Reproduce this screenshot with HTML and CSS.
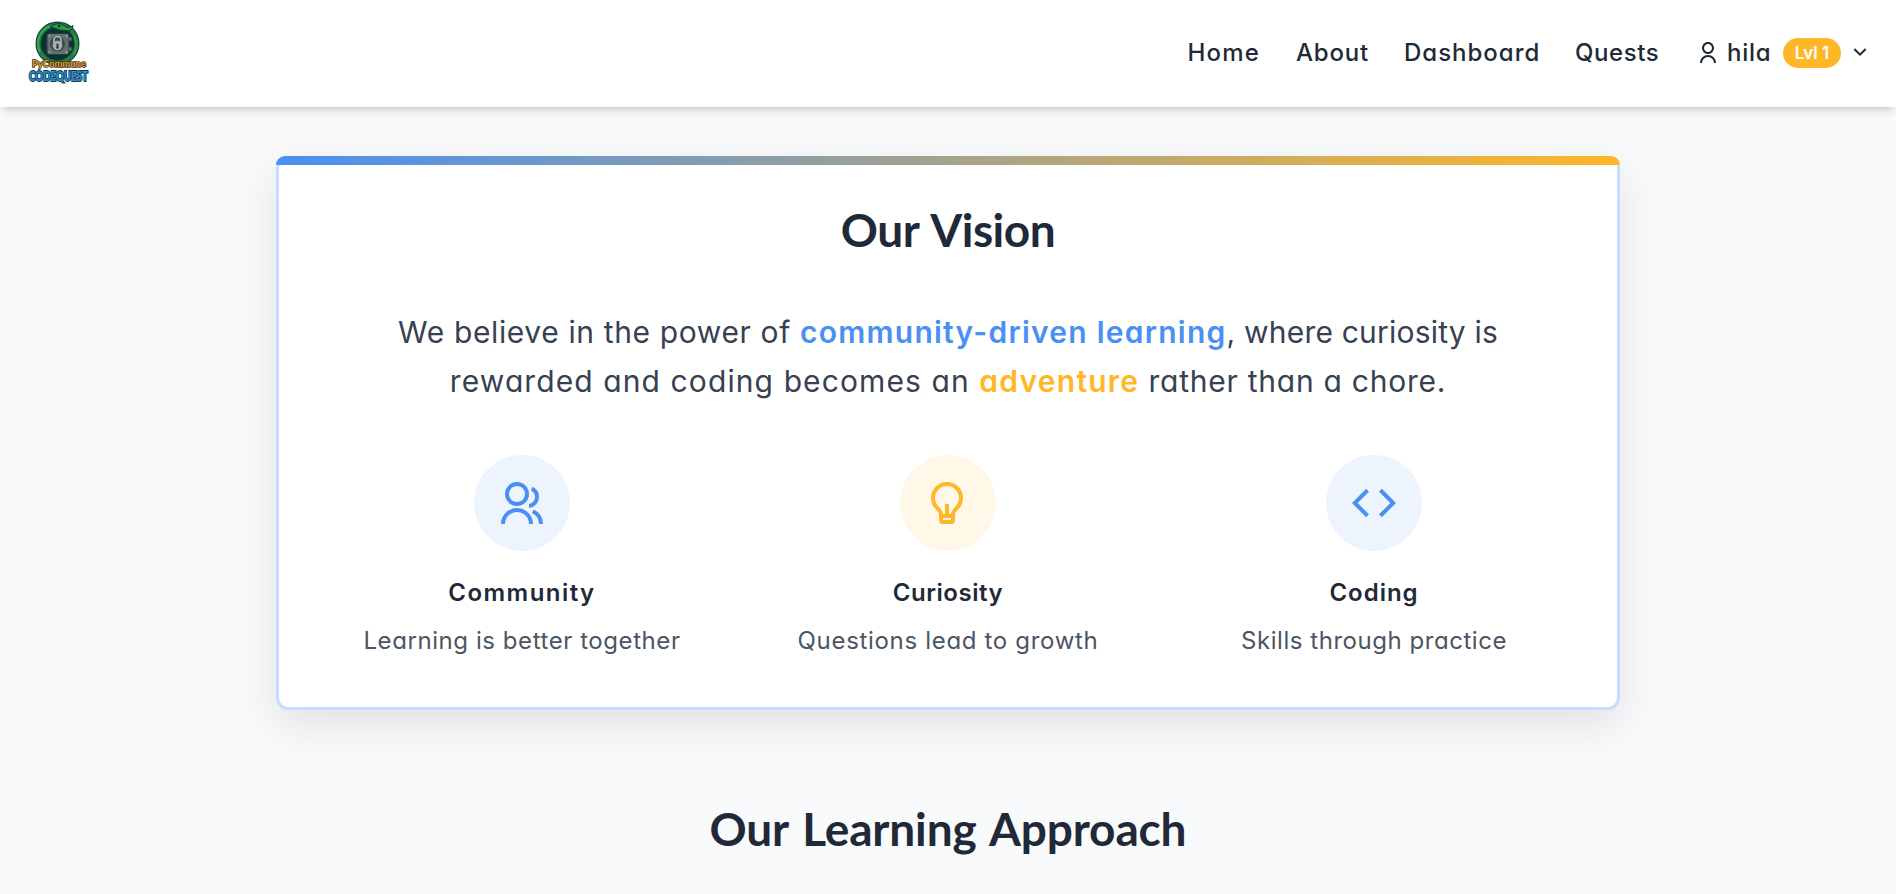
FILE: index.html
```
<!DOCTYPE html>
<html lang="en">
<head>
<meta charset="utf-8">
<title>PyCommune CodeQuest</title>
<link rel="stylesheet" href="styles.css">
</head>
<body>
<header class="header">
  <a class="logo" aria-label="PyCommune CodeQuest">
    <svg class="logo-art" width="66" height="66" viewBox="0 0 66 66">
      <circle cx="31.500" cy="22.500" r="19" fill="#0c3038" stroke="#123c37" stroke-width="6"/>
      <circle cx="31.500" cy="22.500" r="19" fill="none" stroke="#20823f" stroke-width="4"/>
      <path d="M14 31A19 19 0 0 1 24 5" fill="none" stroke="#42ad48" stroke-width="1.600"/>
      <path d="M48 16Q53 24 48 33" fill="none" stroke="#35a047" stroke-width="1.500"/>
      <path d="M25 5Q33 .5 38 4.500Q43 8 47 4.500Q47 9 43 10Q33 10 25 6Z" fill="#2d9845" stroke="#103b35"/>
      <circle cx="33" cy="5" r="1.200" fill="#0b2925"/>
      <rect x="21" y="12.500" width="22" height="21" rx="2" fill="#65716e" stroke="#273c3f"/>
      <path d="M43 16h3v4h-3M43 26h3v4h-3" fill="#65716e" stroke="#263c40"/>
      <g fill="#a0a9a4"><circle cx="23.500" cy="15" r="1"/><circle cx="40.500" cy="15" r="1"/><circle cx="23.500" cy="31" r="1"/><circle cx="40.500" cy="31" r="1"/></g>
      <circle cx="31.500" cy="23" r="7.500" fill="#3b4b4c"/>
      <path d="M28 22v-3a3.500 3.500 0 0 1 7 0V22" fill="none" stroke="#b2bbb5" stroke-width="1.600"/>
      <circle cx="31.500" cy="24.500" r="4.800" fill="#a9b2ac"/>
      <path d="M31.500 22.500a1.300 1.300 0 0 1 .8 2.200l.6 2.800h-2.800l.6-2.800a1.300 1.300 0 0 1 .8-2.200z" fill="#263638"/>
      <text class="logo-name" x="6" y="46" textLength="54" lengthAdjust="spacingAndGlyphs">PyCommune</text>
      <text class="logo-quest" x="3" y="60" textLength="59" lengthAdjust="spacingAndGlyphs">CODEQUEST</text>
    </svg>
  </a>
  <nav class="nav">
    <a class="home">Home</a>
    <a class="about">About</a>
    <a class="dashboard">Dashboard</a>
    <a class="quests">Quests</a>
    <div class="user">
      <svg class="icon" viewBox="0 0 24 24"><path d="M4 22a8 8 0 1 1 16 0h-2a6 6 0 1 0-12 0H4zm8-9c-3.315 0-6-2.685-6-6s2.685-6 6-6 6 2.685 6 6-2.685 6-6 6zm0-2c2.210 0 4-1.790 4-4s-1.790-4-4-4-4 1.790-4 4 1.790 4 4 4z"/></svg>
      <span class="user-name">hila</span>
      <span class="badge">Lvl 1</span>
      <svg class="icon chevron" viewBox="0 0 24 24"><path d="M12 13.172l4.950-4.950 1.414 1.414L12 16 5.636 9.636 7.050 8.222z"/></svg>
    </div>
  </nav>
</header>
<main class="main">
  <section class="card">
    <div class="card-bar"></div>
    <h2 class="title">Our Vision</h2>
    <p class="lead">
      <span class="lead-open">We believe in the power of </span><strong class="blue">community-driven learning</strong><span class="lead-mid">, where curiosity is</span><br>
      <span class="lead-next">rewarded and coding becomes an </span><strong class="gold">adventure</strong><span class="lead-end"> rather than a chore.</span>
    </p>
    <div class="pillars">
      <div class="pillar">
        <div class="disc disc-blue"><svg class="pillar-icon icon-group" viewBox="0 0 24 24"><path d="M2 22a8 8 0 1 1 16 0h-2a6 6 0 1 0-12 0H2zm8-9c-3.315 0-6-2.685-6-6s2.685-6 6-6 6 2.685 6 6-2.685 6-6 6zm0-2c2.210 0 4-1.790 4-4s-1.790-4-4-4-4 1.790-4 4 1.790 4 4 4zm8.284 3.703A8.002 8.002 0 0 1 23 22h-2a6.001 6.001 0 0 0-3.537-5.473l.82-1.824zm-.688-11.290A5.500 5.500 0 0 1 21 8.500a5.499 5.499 0 0 1-5 5.478v-2.013a3.500 3.500 0 0 0 1.041-6.609l.555-1.943z"/></svg></div>
        <h3 class="name name-community">Community</h3>
        <p class="note note-learning">Learning is better together</p>
      </div>
      <div class="pillar">
        <div class="disc disc-gold"><svg class="pillar-icon icon-bulb" viewBox="0 0 24 24"><path d="M9.973 18H11v-5h2v5h1.027c.132-1.202.745-2.194 1.740-3.277.113-.122.832-.867.917-.973a6 6 0 1 0-9.370-.002c.086.107.807.853.918.974.996 1.084 1.609 2.076 1.741 3.278zM10 20v1h4v-1h-4zm-4.246-5a8 8 0 1 1 12.490.002C17.624 15.774 16 17 16 18.500V21a2 2 0 0 1-2 2h-4a2 2 0 0 1-2-2v-2.500C8 17 6.375 15.774 5.754 15z"/></svg></div>
        <h3 class="name name-curiosity">Curiosity</h3>
        <p class="note note-questions">Questions lead to growth</p>
      </div>
      <div class="pillar">
        <div class="disc disc-blue"><svg class="pillar-icon" viewBox="0 0 24 24"><path d="M23 12l-7.071 7.071-1.414-1.414L20.172 12l-5.657-5.657 1.414-1.414L23 12zM3.828 12l5.657 5.657-1.414 1.414L1 12l7.071-7.071 1.414 1.414L3.828 12z"/></svg></div>
        <h3 class="name name-coding">Coding</h3>
        <p class="note note-skills">Skills through practice</p>
      </div>
    </div>
  </section>
  <h2 class="title title-approach">Our Learning Approach</h2>
</main>
</body>
</html>
```
FILE: styles.css
```
* { box-sizing: border-box; }
body {
  margin: 0;
  height: 894px;
  overflow: hidden;
  background: #f9fafc;
  color: #1f2937;
  font-family: Inter, "Liberation Sans", sans-serif;
  font-feature-settings: "cv11";
}
h2, h3, p { margin: 0; }
.header {
  position: relative;
  display: flex;
  align-items: center;
  justify-content: space-between;
  height: 107px;
  padding: 0 24px 0 26px;
  background: #fff;
  box-shadow: 0 6px 9px -1.5px rgba(0, 0, 0, .12), 0 3px 6px -3px rgba(0, 0, 0, .12);
}
.logo { display: block; height: 66px; }
.logo-art { display: block; overflow: visible; }
.logo-name {
  font: 700 10px Lato, sans-serif;
  fill: #f5a01c;
  stroke: #2a2b2b;
  stroke-width: 1.400px;
  paint-order: stroke;
}
.logo-quest {
  font: 900 13px Lato, sans-serif;
  fill: #2494d3;
  stroke: #0f3550;
  stroke-width: 2px;
  paint-order: stroke;
}
.nav {
  display: flex;
  align-items: center;
  font-size: 24px;
  font-weight: 500;
  line-height: 36px;
  margin-bottom: 1px;
}
.home { width: 108.500px; letter-spacing: 1.200px; }
.about { width: 108px; letter-spacing: .8px; }
.dashboard { width: 171px; letter-spacing: 1px; }
.quests { width: 121px; letter-spacing: .6px; }
.user { display: flex; align-items: center; }
.icon { width: 24px; height: 24px; fill: currentColor; }
.user-name { width: 56px; margin-left: 7px; letter-spacing: .7px; }
.badge {
  width: 58px;
  height: 30px;
  border-radius: 15px;
  background: #ffb627;
  color: #fff;
  font-size: 17px;
  font-weight: 600;
  line-height: 30px;
  text-align: center;
}
.chevron { margin-left: 7px; margin-top: -2px; }
.main { display: flex; flex-direction: column; align-items: center; padding-top: 49px; }
.card {
  position: relative;
  width: 1344px;
  height: 554px;
  padding: 46px 48px 0;
  background: #fff;
  border: 3px solid #c8ddfc;
  border-radius: 12px;
  box-shadow: 0 15px 45px rgba(0, 0, 0, .1);
}
.card-bar {
  position: absolute;
  top: -3px;
  left: -3px;
  right: -3px;
  height: 9px;
  border-radius: 12px 12px 0 0;
  background: linear-gradient(90deg, #4a90f2, #ffb627);
}
.title {
  font-family: Lato, sans-serif;
  font-size: 46px;
  font-weight: 700;
  line-height: 50px;
  letter-spacing: -.5px;
  word-spacing: 3px;
  text-align: center;
}
.title-approach { margin-top: 94px; letter-spacing: -.15px; }
.lead {
  margin-top: 53px;
  color: #374151;
  font-size: 30px;
  line-height: 49px;
  text-align: center;
  white-space: nowrap;
}
.lead strong { font-weight: 600; letter-spacing: 1.250px; }
.lead-open { letter-spacing: .63px; }
.lead-mid { letter-spacing: .2px; }
.lead-next { letter-spacing: 1.100px; }
.lead-end { letter-spacing: .75px; }
.blue { color: #4a90f2; }
.gold { color: #ffb627; }
.pillars { display: grid; grid-template-columns: repeat(3, 1fr); gap: 36px; margin-top: 49px; }
.pillar { display: flex; flex-direction: column; align-items: center; }
.disc { display: flex; align-items: center; justify-content: center; width: 96px; height: 96px; border-radius: 50%; }
.disc-blue { background: #edf4fe; color: #4a90f2; }
.disc-gold { background: #fff8e9; color: #ffb627; }
.pillar-icon { width: 48px; height: 48px; fill: currentColor; }
.icon-group { margin: 1px 3px 0 0; }
.icon-bulb { margin: 0 2px 2px 0; }
.name { margin-top: 24px; font-size: 24px; font-weight: 600; line-height: 36px; }
.name-community { letter-spacing: 1.450px; }
.name-curiosity { letter-spacing: .55px; }
.name-coding { letter-spacing: 1px; }
.note { margin-top: 12px; color: #4b5563; font-size: 24px; line-height: 36px; }
.note-learning { letter-spacing: .57px; }
.note-questions { letter-spacing: .68px; }
.note-skills { letter-spacing: .54px; }
```
